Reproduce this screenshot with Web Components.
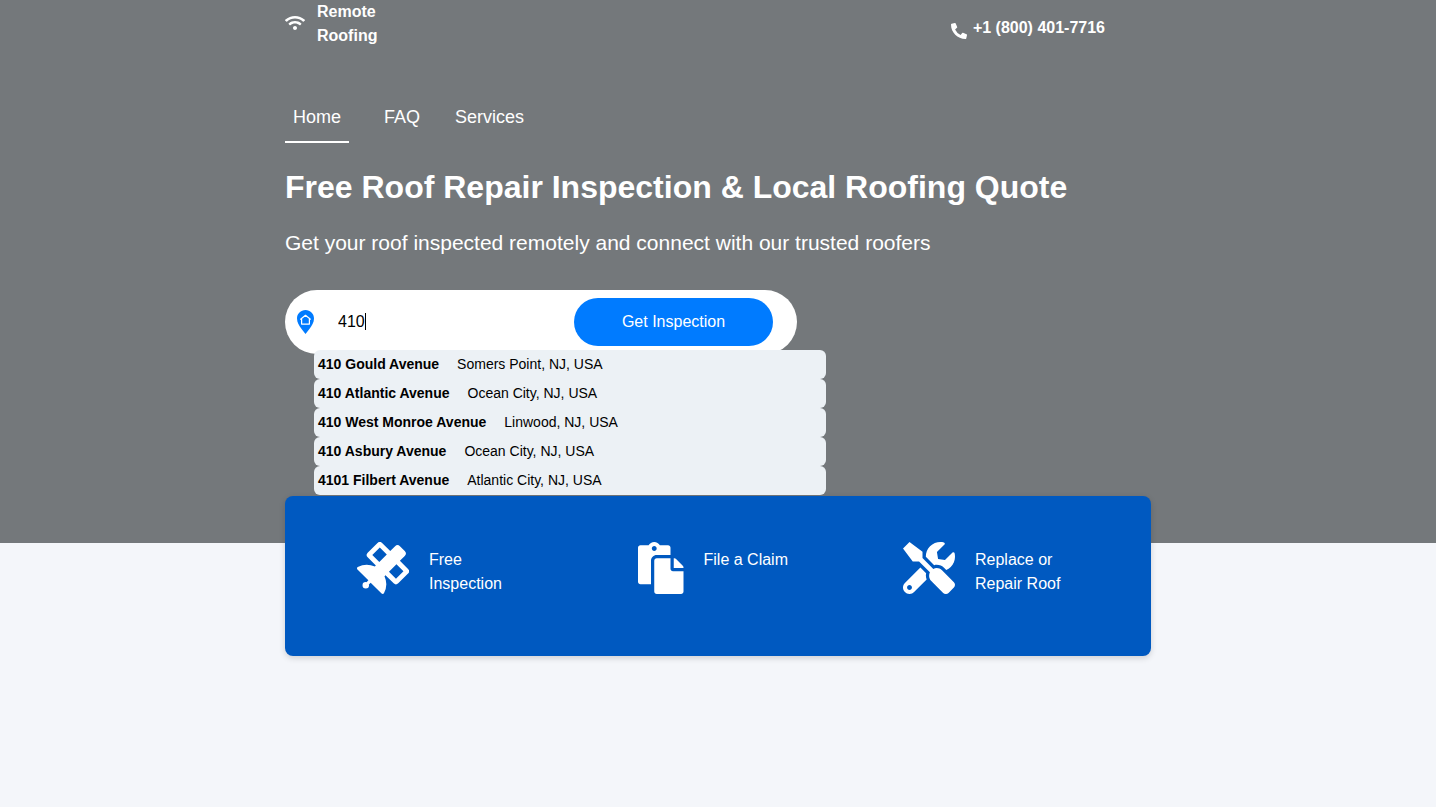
<!DOCTYPE html>
<html lang="en">
<head>
<meta charset="utf-8">
<meta name="viewport" content="width=device-width, initial-scale=1">
<title>Remote Roofing</title>
<style>
  body { margin: 0; min-height: 100vh; background: #f4f6fa; font: 16px/24px "Liberation Sans", Arial, sans-serif; color: #fff; }
</style>
</head>
<body>
<roof-page></roof-page>
<script>
const icons = {
  wifi: ['0 0 640 512', 'M634.91 154.88C457.74-8.99 182.19-8.93 5.09 154.88c-6.66 6.16-6.79 16.59-.35 22.98l34.24 33.97c6.14 6.1 16.02 6.23 22.4.38 145.92-133.68 371.3-133.71 517.25 0 6.38 5.85 16.26 5.71 22.4-.38l34.24-33.97c6.43-6.39 6.3-16.82-.36-22.98zM320 352c-35.35 0-64 28.65-64 64s28.65 64 64 64 64-28.65 64-64-28.65-64-64-64zm202.67-83.59c-115.26-101.93-290.21-101.82-405.34 0-6.9 6.1-7.12 16.69-.57 23.15l34.44 33.99c6 5.92 15.66 6.32 22.05.8 83.95-72.57 209.74-72.41 293.49 0 6.39 5.52 16.05 5.13 22.05-.8l34.44-33.99c6.56-6.46 6.33-17.06-.56-23.15z'],
  phone: ['0 0 512 512', 'M497.39 361.8l-112-48a24 24 0 0 0-28 6.9l-49.6 60.6A370.66 370.66 0 0 1 130.6 204.11l60.6-49.6a23.94 23.94 0 0 0 6.9-28l-48-112A24.16 24.16 0 0 0 122.6.61l-104 24A24 24 0 0 0 0 48c0 256.5 207.9 464 464 464a24 24 0 0 0 23.4-18.6l24-104a24.29 24.29 0 0 0-14.01-27.6z'],
  satellite: ['0 0 512 512', 'M502.6 310l-96.7 96.7a31.9 31.9 0 0 1-45 0l-80.3-80.4-9.9 9.9a190.6 190.6 0 0 1-5.4 168.5c-4.5 8.5-16.4 9.6-23.2 2.8L134.5 400l-17.8 17.8c.7 2.6 1.6 5 1.6 7.8a32 32 0 1 1-32-32c2.8 0 5.2.9 7.8 1.6l17.8-17.8L4.4 269.9c-6.8-6.8-5.7-18.6 2.8-23.2a190.6 190.6 0 0 1 168.5-5.4l9.8-9.8-80.3-80.4a32 32 0 0 1 0-45.1L202 9.3a31.6 31.6 0 0 1 45.1 0l80.3 80.3 47.8-47.9a33.6 33.6 0 0 1 47.5 0l47.5 47.5a33.6 33.6 0 0 1 0 47.5l-47.8 47.9 80.3 80.4a31.8 31.8 0 0 1-.1 45zM219.6 197.4l73.8-73.8-68.9-68.9-73.8 73.8zm237.9 90.1l-68.9-68.9-73.8 73.8 68.9 68.9z'],
  paste: ['0 0 448 512', 'M128 184c0-30.879 25.122-56 56-56h136V56c0-13.255-10.745-24-24-24h-80.61C204.306 12.89 183.637 0 160 0s-44.306 12.89-55.39 32H24C10.745 32 0 42.745 0 56v336c0 13.255 10.745 24 24 24h104V184zm32-144c13.255 0 24 10.745 24 24s-10.745 24-24 24-24-10.745-24-24 10.745-24 24-24zm184 248h104v200c0 13.255-10.745 24-24 24H184c-13.255 0-24-10.745-24-24V184c0-13.255 10.745-24 24-24h136v104c0 13.2 10.8 24 24 24zm104-38.059V256h-96v-96h6.059a24 24 0 0 1 16.97 7.029l65.941 65.941a24.002 24.002 0 0 1 7.03 16.971z'],
  tools: ['0 0 512 512', 'M501.1 395.7L384 278.6c-23.1-23.1-57.6-27.6-85.4-13.9L192 158.1V96L64 0 0 64l96 128h62.1l106.6 106.6c-13.6 27.8-9.2 62.3 13.9 85.4l117.1 117.1c14.6 14.6 38.2 14.6 52.7 0l52.7-52.7c14.5-14.6 14.5-38.2 0-52.7zM331.7 225c28.3 0 54.9 11 74.9 31l19.4 19.4c15.8-6.9 30.8-16.5 43.8-29.5 37.1-37.1 49.7-89.3 37.9-136.7-2.2-9-13.5-12.1-20.1-5.5l-74.4 74.4-67.9-11.3L334 98.9l74.4-74.4c6.6-6.6 3.4-17.9-5.7-20.2-47.4-11.7-99.6.9-136.6 37.9-28.5 28.5-41.9 66.1-41.2 103.6l82.1 82.1c8.1-1.9 16.5-2.9 24.7-2.9zm-103.9 82l-56.7-56.7L18.7 402.8c-25 25-25 65.5 0 90.5s65.5 25 90.5 0l123.6-123.6c-7.6-19.9-9.9-41.6-5-62.7zM64 472c-13.2 0-24-10.8-24-24 0-13.3 10.7-24 24-24s24 10.7 24 24c0 13.2-10.7 24-24 24z']
};

function define(name, html) {
  customElements.define(name, class extends HTMLElement {
    constructor() {
      super();
      const t = document.createElement('template');
      t.innerHTML = html;
      this.attachShadow({ mode: 'open' }).append(t.content.cloneNode(true));
    }
  });
}

customElements.define('roof-icon', class extends HTMLElement {
  connectedCallback() {
    if (this.shadowRoot) return;
    const [box, path] = icons[this.getAttribute('name')];
    this.attachShadow({ mode: 'open' }).innerHTML = `
      <style>:host { display: block; flex: none; } svg { display: block; height: 100%; fill: currentColor; }</style>
      <svg viewBox="${box}" aria-hidden="true"><path fill-rule="evenodd" d="${path}"/></svg>`;
  }
});

define('roof-header', `
  <style>
    :host { display: flex; justify-content: space-between; align-items: flex-start; height: 105px; padding-right: 46px; font-weight: 700; }
    a { display: flex; color: inherit; text-decoration: none; }
    .brand { gap: 12px; width: 96px; }
    .brand roof-icon { height: 16px; margin-top: 15px; }
    .call { gap: 6px; padding-top: 16px; }
    .call roof-icon { height: 16px; margin-top: 7px; }
  </style>
  <a class="brand" href="#home"><roof-icon name="wifi"></roof-icon><span>Remote Roofing</span></a>
  <a class="call" href="tel:+18004017716"><roof-icon name="phone"></roof-icon><span>+1 (800) 401-7716</span></a>`);

define('roof-nav', `
  <style>
    :host { display: block; }
    nav { display: flex; gap: 19px; font-size: 18px; }
    a { padding: 0 8px 12px; border-bottom: 2px solid transparent; color: inherit; text-decoration: none; }
    a[aria-current] { border-color: #fff; margin-right: 8px; }
  </style>
  <nav><a href="#home" aria-current="page">Home</a><a href="#faq">FAQ</a><a href="#services">Services</a></nav>`);

define('roof-suggestion', `
  <style>
    :host { display: block; }
    button { display: flex; gap: 18px; width: 100%; padding: 0 4px; border: 0; border-radius: 6px; background: #ecf1f5; color: #000; font: inherit; font-size: 14px; line-height: 29px; text-align: left; white-space: nowrap; }
  </style>
  <button type="button"><b><slot></slot></b><span><slot name="place"></slot></span></button>`);

define('roof-search', `
  <style>
    :host { display: block; position: relative; max-width: 512px; color: #000; }
    form { display: flex; align-items: center; box-sizing: border-box; height: 64px; padding: 8px 24px 8px 12px; border-radius: 32px; background: #fff; }
    .pin { flex: none; width: 17px; height: 24px; }
    .field { position: relative; flex: 1; min-width: 0; margin-left: 24px; }
    input { display: block; box-sizing: border-box; width: 100%; height: 48px; padding: 0; border: 0; outline: 0; background: none; color: #000; font: inherit; }
    .caret { position: absolute; left: 27px; top: 15px; width: 1px; height: 17px; background: #000; }
    form button { flex: none; width: 199px; height: 48px; padding: 0; border: 0; border-radius: 24px; background: #007bff; color: #fff; font: inherit; }
    .list { position: absolute; z-index: 1; top: 60px; left: 29px; width: 100%; }
  </style>
  <form>
    <svg class="pin" viewBox="0 0 17 24" aria-hidden="true">
      <path fill="#007bff" d="M8.500 0C3.800 0 0 3.700 0 8.400c0 4.100 2.300 7.300 4.400 10.300L8.500 24l4.100-5.300c2.100-3 4.400-6.200 4.400-10.300C17 3.700 13.200 0 8.500 0z"/>
      <path fill="none" stroke="#fff" stroke-width="1.200" stroke-linejoin="round" d="M3.600 9.200L8.500 5.300l4.900 3.900h-1v4.900H4.600V9.200z"/>
    </svg>
    <div class="field"><input type="text" aria-label="Property address" value="410" autocomplete="off"><span class="caret"></span></div>
    <button type="button">Get Inspection</button>
  </form>
  <div class="list">
    <roof-suggestion>410 Gould Avenue<span slot="place">Somers Point, NJ, USA</span></roof-suggestion>
    <roof-suggestion>410 Atlantic Avenue<span slot="place">Ocean City, NJ, USA</span></roof-suggestion>
    <roof-suggestion>410 West Monroe Avenue<span slot="place">Linwood, NJ, USA</span></roof-suggestion>
    <roof-suggestion>410 Asbury Avenue<span slot="place">Ocean City, NJ, USA</span></roof-suggestion>
    <roof-suggestion>4101 Filbert Avenue<span slot="place">Atlantic City, NJ, USA</span></roof-suggestion>
  </div>`);

define('roof-feature', `
  <style>
    :host { display: flex; gap: 20px; }
    ::slotted(roof-icon) { height: 52px; }
    .label { max-width: 90px; padding-top: 6px; }
  </style>
  <slot name="icon"></slot><div class="label"><slot></slot></div>`);

define('roof-features', `
  <style>
    :host { display: grid; grid-template-columns: 281fr 265fr 248fr; box-sizing: border-box; min-height: 160px; padding: 46px 0 46px 72px; border-radius: 8px; background: #0059c0; box-shadow: 0 2px 6px rgba(0, 0, 0, .16); }
  </style>
  <roof-feature><roof-icon slot="icon" name="satellite"></roof-icon>Free Inspection</roof-feature>
  <roof-feature><roof-icon slot="icon" name="paste"></roof-icon>File a Claim</roof-feature>
  <roof-feature><roof-icon slot="icon" name="tools"></roof-icon>Replace or Repair Roof</roof-feature>`);

define('roof-page', `
  <style>
    :host { display: block; }
    .hero { background: #74787b; padding-bottom: 189px; }
    .wrap { width: calc(100% - 32px); max-width: 866px; margin: 0 auto; }
    h1 { margin: 24px 0 0; font-size: 32px; line-height: 40px; }
    p { margin: 20px 0 31px; font-size: 21px; line-height: 32px; }
    roof-features { margin-top: -47px; }
  </style>
  <section class="hero"><div class="wrap">
    <roof-header></roof-header>
    <roof-nav></roof-nav>
    <h1>Free Roof Repair Inspection &amp; Local Roofing Quote</h1>
    <p>Get your roof inspected remotely and connect with our trusted roofers</p>
    <roof-search></roof-search>
  </div></section>
  <div class="wrap"><roof-features></roof-features></div>`);
</script>
</body>
</html>
